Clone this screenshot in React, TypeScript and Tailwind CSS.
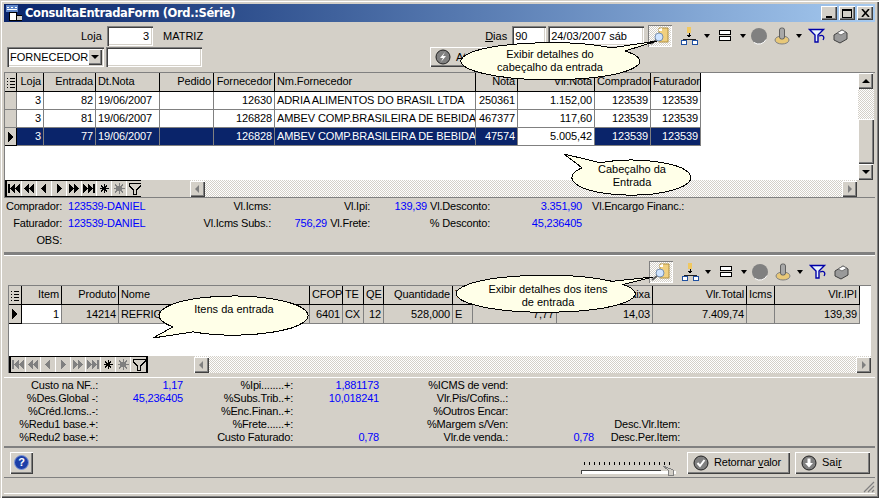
const bevel = 'shadow-[inset_1px_1px_0_#fff,inset_-1px_-1px_0_#404040,inset_-2px_-2px_0_#808080]';
const sunken = 'shadow-[inset_1px_1px_0_#808080,inset_2px_2px_0_#404040,inset_-1px_-1px_0_#fff,inset_-2px_-2px_0_#d4d0c8]';
const dither = 'bg-[repeating-conic-gradient(#d4d0c8_0_25%,#fff_0_50%)] bg-[length:2px_2px]';

type Col = { label: string; left?: boolean };

const cols1: Col[] = [
  { label: 'Loja' }, { label: 'Entrada' }, { label: 'Dt.Nota', left: true }, { label: 'Pedido' },
  { label: 'Fornecedor' }, { label: 'Nm.Fornecedor', left: true }, { label: 'Nota' }, { label: 'Vlr.Nota' },
  { label: 'Comprador' }, { label: 'Faturador' },
];
const rows1 = [
  ['3', '82', '19/06/2007', '', '12630', 'ADRIA ALIMENTOS DO BRASIL LTDA', '250361', '1.152,00', '123539', '123539'],
  ['3', '81', '19/06/2007', '', '126828', 'AMBEV COMP.BRASILEIRA DE BEBIDA', '467377', '117,60', '123539', '123539'],
  ['3', '77', '19/06/2007', '', '126828', 'AMBEV COMP.BRASILEIRA DE BEBIDA', '47574', '5.005,42', '123539', '123539'],
];
const cols2: Col[] = [
  { label: 'Item' }, { label: 'Produto' }, { label: 'Nome', left: true }, { label: 'CFOP' }, { label: 'TE', left: true },
  { label: 'QE' }, { label: 'Quantidade' }, { label: 'T', left: true }, { label: 'Vlr.Unit' }, { label: 'Vlr.Caixa' },
  { label: 'Vlr.Total' }, { label: 'Icms', left: true }, { label: 'Vlr.IPI' },
];
const row2 = ['1', '14214', 'REFRIGERANTE', '6401', 'CX', '12', '528,000', 'E', '7,77', '14,03', '7.409,74', '', '139,39'];

const tpl1 = 'grid grid-cols-[12px_27px_52px_64px_54px_61px_201px_42px_77px_56px_50px] w-max';
const tpl2 = 'grid grid-cols-[13px_40px_57px_191px_33px_21px_20px_69px_20px_84px_96px_94px_28px_85px] w-max';

function Arrow({ dir }: { dir: 'l' | 'r' | 'u' | 'd' }) {
  const pts = { l: '6,1 2,5 6,9', r: '3,1 7,5 3,9', u: '1,7 5,3 9,7', d: '1,3 5,7 9,3' }[dir];
  const fill = dir === 'u' || dir === 'd' ? '#000' : '#808080';
  return (
    <svg width="10" height="10" viewBox="0 0 10 10"><polygon points={pts} fill={fill} /></svg>
  );
}

function NavGlyph({ kind, off }: { kind: string; off?: boolean }) {
  const c = off ? '#808080' : '#000';
  const body: Record<string, React.ReactNode> = {
    first: <><rect x="1" y="2" width="2" height="9" fill={c} /><polygon points="8,2 3,6.5 8,11" fill={c} /><polygon points="13,2 8,6.5 13,11" fill={c} /></>,
    prevp: <><polygon points="7,2 2,6.5 7,11" fill={c} /><polygon points="12,2 7,6.5 12,11" fill={c} /></>,
    prev: <polygon points="9,2 4,6.5 9,11" fill={c} />,
    next: <polygon points="5,2 10,6.5 5,11" fill={c} />,
    nextp: <><polygon points="2,2 7,6.5 2,11" fill={c} /><polygon points="7,2 12,6.5 7,11" fill={c} /></>,
    last: <><polygon points="1,2 6,6.5 1,11" fill={c} /><polygon points="6,2 11,6.5 6,11" fill={c} /><rect x="11" y="2" width="2" height="9" fill={c} /></>,
    star: <path d="M7 2v9M2.5 6.5h9M3.8 3.3l6.4 6.4M10.2 3.3l-6.4 6.4" stroke="#000" strokeWidth="1" />,
    sun: <><circle cx="7" cy="6.5" r="3" fill="#808080" /><path d="M7 1v11M1.5 6.5h11M3 2.5l8 8M11 2.5l-8 8" stroke="#808080" strokeWidth="1" /></>,
    filter: <path d="M1 1.5h12v2L8.5 8v4h-3V8L1 3.5z" fill="none" stroke="#000" strokeWidth="1" />,
  };
  return (
    <div className="w-[15px] h-[15px] flex items-center justify-center bg-[#d4d0c8] border-r border-white last:border-r-0">
      <svg width="14" height="13" viewBox="0 0 14 13" shapeRendering="crispEdges">{body[kind]}</svg>
    </div>
  );
}

function Navigator({ off }: { off?: boolean }) {
  const kinds = ['first', 'prevp', 'prev', 'next', 'nextp', 'last'];
  return (
    <div className="flex border-2 border-black bg-white h-[17px] items-center shrink-0">
      {kinds.map(k => <NavGlyph key={k} kind={k} off={off} />)}
      <NavGlyph kind="star" />
      <NavGlyph kind="sun" />
      <NavGlyph kind="filter" />
    </div>
  );
}

function ScrollBtn({ dir }: { dir: 'l' | 'r' | 'u' | 'd' }) {
  return (
    <div className={`w-[15px] h-[16px] shrink-0 bg-[#d4d0c8] flex items-center justify-center ${bevel}`}>
      <Arrow dir={dir} />
    </div>
  );
}

function Drop({ className }: { className: string }) {
  return <div className={`${className} w-0 h-0 border-x-[3.5px] border-x-transparent border-t-[4px] border-t-black`} />;
}

function Toolbar() {
  return (
    <div className="flex items-center h-[22px]">
      <div className={`w-[24px] h-[22px] flex items-center justify-center ${dither} shadow-[inset_1px_1px_0_#808080,inset_-1px_-1px_0_#fff]`}>
        <svg width="20" height="18" viewBox="0 0 20 18">
          <path d="M9 1h9v14H9z" fill="#f0d080" stroke="#b09040" />
          <path d="M9 2l3-1v3H9z" fill="#fff" />
          <circle cx="9" cy="10" r="4" fill="#cfe4ff" stroke="#7890b0" />
          <path d="M6 13l-5 4" stroke="#606060" strokeWidth="2" />
        </svg>
      </div>
      <svg className="ml-[8px]" width="20" height="18" viewBox="0 0 20 18" shapeRendering="crispEdges">
        <rect x="7" y="0" width="4" height="6" fill="#f0c860" />
        <path d="M9 6v4M7 8h4M8 9h2" stroke="#000" />
        <path d="M3 12h12M3 12v1M15 12v1" stroke="#202020" />
        <rect x="1" y="13" width="5" height="4" fill="#fff" stroke="#2050a0" />
        <rect x="12" y="13" width="5" height="4" fill="#fff" stroke="#2050a0" />
      </svg>
      <Drop className="ml-[4px]" />
      <svg className="ml-[7px]" width="18" height="14" viewBox="0 0 18 14" shapeRendering="crispEdges">
        <rect x="2.5" y="1.5" width="11" height="4" fill="#fff" stroke="#000" />
        <rect x="2.5" y="7.5" width="11" height="4" fill="#fff" stroke="#000" />
      </svg>
      <Drop className="ml-[5px]" />
      <svg className="ml-[4px]" width="18" height="18" viewBox="0 0 18 18">
        <circle cx="9" cy="9" r="8" fill="#808080" />
        <path d="M4 15.5a8 8 0 0 0 12-3" fill="none" stroke="#fff" />
      </svg>
      <svg className="ml-[5px]" width="18" height="20" viewBox="0 0 18 20">
        <ellipse cx="9" cy="14" rx="7" ry="4" fill="#e8c878" stroke="#808080" />
        <rect x="6.5" y="2" width="5" height="11" rx="2" fill="#a8a8a8" stroke="#606060" />
      </svg>
      <Drop className="ml-[5px]" />
      <svg className="ml-[6px]" width="20" height="18" viewBox="0 0 20 18">
        <path d="M1.5 2.5h14l-5.5 5.5v7H7V8z" fill="#e8f4ff" stroke="#0000a8" strokeWidth="1.4" />
        <path d="M11 9c4-2 6 1 4 4" fill="none" stroke="#0000a8" strokeWidth="1.2" />
      </svg>
      <svg className="ml-[4px]" width="17" height="16" viewBox="0 0 17 16">
        <path d="M2 7l8-5 5 3v6l-7 4-6-3z" fill="#9a9a9a" stroke="#404040" />
        <path d="M5 5l5-3 4 2-5 3z" fill="#fff" stroke="#707070" />
      </svg>
    </div>
  );
}

function Indicator({ kind }: { kind: 'head' | 'row' | 'blank' }) {
  return (
    <div className={`bg-[#d4d0c8] border-r border-b flex items-center justify-center ${kind === 'blank' ? 'border-[#808080]' : 'border-black'}`}>
      {kind === 'row' && (
        <svg width="6" height="10" viewBox="0 0 6 10" shapeRendering="crispEdges"><polygon points="0,0 6,5 0,10" fill="#000" /></svg>
      )}
      {kind === 'head' && (
        <svg width="8" height="11" viewBox="0 0 8 11" shapeRendering="crispEdges">
          <path d="M0 1h1M0 4h1M0 7h1M0 10h1M3 1h5M3 4h5M3 7h5M3 10h5" stroke="#000" />
        </svg>
      )}
    </div>
  );
}

function Head({ col }: { col: Col }) {
  return (
    <div className={`h-[19px] px-[2px] leading-[17px] tracking-[-0.1px] whitespace-nowrap overflow-hidden border-r border-b border-black bg-[#d4d0c8] ${col.left ? 'text-left' : 'text-right'}`}>
      {col.label}
    </div>
  );
}

function InfoLabel({ children, className = '' }: { children?: React.ReactNode; className?: string }) {
  return <div className={`text-right whitespace-nowrap tracking-[-0.2px] ${className}`}>{children}</div>;
}

function InfoValue({ children, className = '' }: { children?: React.ReactNode; className?: string }) {
  return <div className={`text-right whitespace-nowrap tracking-[-0.2px] text-[#0000ff] ${className}`}>{children}</div>;
}

const lower = [
  ['Custo na NF..:', '1,17', '%Ipi........+:', '1,881173', '%ICMS de vend:', '', ''],
  ['%Des.Global -:', '45,236405', '%Subs.Trib..+:', '10,018241', 'Vlr.Pis/Cofins..:', '', ''],
  ['%Créd.Icms..-:', '', '%Enc.Finan..+:', '', '%Outros Encar:', '', ''],
  ['%Redu1 base.+:', '', '%Frete......+:', '', '%Margem s/Ven:', '', 'Desc.Vlr.Item:'],
  ['%Redu2 base.+:', '', 'Custo Faturado:', '0,78', 'Vlr.de venda.:', '0,78', 'Desc.Per.Item:'],
];

function CircleBtnIcon({ kind }: { kind: 'check' | 'down' | 'bolt' }) {
  return (
    <svg className="shrink-0" width="16" height="16" viewBox="0 0 16 16">
      <circle cx="8" cy="8" r="7" fill="#808080" stroke="#202020" />
      {kind === 'check' && <path d="M4.5 8l2.5 3 4.5-6" fill="none" stroke="#fff" strokeWidth="2" />}
      {kind === 'down' && <path d="M6.5 3.5h3V8H12l-4 4.5L4 8h2.5z" fill="#fff" />}
      {kind === 'bolt' && <path d="M10 3L5 9h3l-2 4 5-6H8z" fill="#fff" />}
    </svg>
  );
}

export default function App() {
  return (
    <div className="relative w-[879px] h-[498px] overflow-hidden bg-[#d4d0c8] p-[4px] text-[11px] leading-[13px] text-black font-['Liberation_Sans',Arial,sans-serif] shadow-[inset_1px_1px_0_#d4d0c8,inset_2px_2px_0_#fff,inset_-1px_-1px_0_#404040,inset_-2px_-2px_0_#808080]">
      {/* title bar */}
      <div className="h-[18px] flex items-center bg-gradient-to-r from-[#0a246a] to-[#a6caf0] pl-[2px] pr-[2px]">
        <svg width="16" height="16" viewBox="0 0 16 16" shapeRendering="crispEdges">
          <rect x="0" y="0" width="12" height="7" fill="#5f86c8" />
          <path d="M1 2h2M5 2h2M9 2h2M1 4h10" stroke="#fff" />
          <rect x="3" y="7" width="7" height="8" fill="#fff" stroke="#000" />
          <rect x="10" y="10" width="6" height="5" fill="#d4d0c8" stroke="#000" />
        </svg>
        <span className="ml-[3px] text-white font-bold text-[11.5px] font-['DejaVu_Sans',sans-serif] tracking-[-0.35px] whitespace-nowrap">ConsultaEntradaForm (Ord.:Série)</span>
        <div className="ml-auto flex items-center">
          <div className={`w-[16px] h-[14px] bg-[#d4d0c8] flex items-end justify-center pb-[2px] ${bevel}`}><div className="w-[6px] h-[2px] bg-black" /></div>
          <div className={`ml-[2px] w-[16px] h-[14px] bg-[#d4d0c8] flex items-center justify-center ${bevel}`}><div className="w-[10px] h-[9px] border border-black border-t-2" /></div>
          <div className={`ml-[2px] w-[16px] h-[14px] bg-[#d4d0c8] flex items-center justify-center ${bevel}`}>
            <svg width="9" height="8" viewBox="0 0 9 8"><path d="M1 0l7 8M8 0L1 8" stroke="#000" strokeWidth="1.6" /></svg>
          </div>
        </div>
      </div>

      {/* top controls */}
      <div className="h-[50px]">
        <div className="h-[25px] flex items-center pt-[3px]">
          <span className="ml-[77px] w-[26px]">Lo<span className="underline">j</span>a</span>
          <div className={`w-[46px] h-[20px] bg-white text-right pr-[4px] leading-[20px] ${sunken}`}>3</div>
          <span className="ml-[10px]">MATRIZ</span>
          <span className="ml-[282px] w-[27px]"><span className="underline">D</span>ias</span>
          <div className={`w-[34px] h-[20px] bg-white pl-[3px] leading-[20px] ${sunken}`}>90</div>
          <div className={`ml-[2px] w-[96px] h-[20px] bg-white pl-[3px] leading-[20px] ${sunken}`}>24/03/2007 sáb</div>
          <div className="ml-[4px]"><Toolbar /></div>
        </div>
        <div className="h-[25px] flex items-start">
          <div className={`ml-[3px] w-[97px] h-[20px] bg-white pl-[3px] flex items-center justify-between pr-[2px] ${sunken}`}>
            <span>FORNECEDOR</span>
            <div className={`w-[15px] h-[16px] bg-[#d4d0c8] flex items-center justify-center ${bevel}`}><Arrow dir="d" /></div>
          </div>
          <div className={`ml-[2px] w-[96px] h-[20px] bg-white ${sunken}`} />
          <div className={`ml-[228px] w-[90px] h-[20px] flex items-center pl-[5px] gap-[5px] bg-[#d4d0c8] ${bevel}`}>
            <CircleBtnIcon kind="bolt" />
            <span>Atualizar</span>
          </div>
        </div>
      </div>

      {/* master grid */}
      <div className="h-[125px] flex flex-col border-t border-l border-[#808080]">
        <div className="flex h-[107px]">
          <div className="w-[853px] bg-white overflow-hidden tracking-[-0.1px]">
            <div className={tpl1}>
              <Indicator kind="head" />
              {cols1.map(c => <Head key={c.label} col={c} />)}
            </div>
            {rows1.map((row, i) => (
              <div key={i} className={`${tpl1} h-[18px]`}>
                <Indicator kind={i === 2 ? 'row' : 'blank'} />
                {row.map((v, j) => (
                  <div
                    key={j}
                    className={`px-[2px] leading-[17px] whitespace-nowrap overflow-hidden border-r border-b border-[#808080] ${cols1[j].left ? 'text-left' : 'text-right'} ${i === 2 && j !== 7 ? 'bg-[#0a246a] text-white' : 'bg-white'}`}
                  >
                    {v}
                  </div>
                ))}
              </div>
            ))}
          </div>
          <div className="w-[16px] flex flex-col">
            <ScrollBtn dir="u" />
            <div className={`h-[30px] ${dither}`} />
            <div className={`h-[45px] bg-[#d4d0c8] ${bevel}`} />
            <ScrollBtn dir="d" />
          </div>
        </div>
        <div className={`h-[17px] flex items-center w-[852px] ${dither}`}>
          <div className="w-[136px] self-stretch bg-[#d4d0c8] flex items-center"><Navigator /></div>
          <div className="w-[49px] self-stretch bg-[#d4d0c8]" />
          <ScrollBtn dir="l" />
          <div className="flex-1" />
          <ScrollBtn dir="r" />
        </div>
      </div>

      {/* master details */}
      <div className="h-[55px] border-t border-[#808080] grid grid-cols-[58px_130px_79px_56px_43px_57px_63px_92px_auto] grid-rows-[17px_17px_16px] content-start leading-[17px]">
        <InfoLabel>Comprador:</InfoLabel>
        <InfoValue className="text-left! pl-[6px]">123539-DANIEL</InfoValue>
        <InfoLabel>Vl.Icms:</InfoLabel>
        <InfoValue />
        <InfoLabel>Vl.Ipi:</InfoLabel>
        <InfoValue>139,39</InfoValue>
        <InfoLabel>Vl.Desconto:</InfoLabel>
        <InfoValue>3.351,90</InfoValue>
        <InfoLabel className="pl-[10px] text-left!">Vl.Encargo Financ.:</InfoLabel>

        <InfoLabel>Faturador:</InfoLabel>
        <InfoValue className="text-left! pl-[6px]">123539-DANIEL</InfoValue>
        <InfoLabel>Vl.Icms Subs.:</InfoLabel>
        <InfoValue>756,29</InfoValue>
        <InfoLabel>Vl.Frete:</InfoLabel>
        <InfoValue />
        <InfoLabel>% Desconto:</InfoLabel>
        <InfoValue>45,236405</InfoValue>
        <div />

        <InfoLabel>OBS:</InfoLabel>
      </div>

      {/* splitter */}
      <div className="h-[4px] border-t-[3px] border-[#808080] border-b border-b-white" />

      {/* detail section */}
      <div className="h-[119px] flex flex-col">
        <div className="h-[29px] flex items-start pl-[645px] pt-[5px]"><Toolbar /></div>
        <div className="ml-[4px] w-[863px] flex flex-col border-t border-l border-[#808080]">
          <div className="h-[70px] bg-white overflow-hidden tracking-[-0.1px]">
            <div className={tpl2}>
              <Indicator kind="head" />
              {cols2.map(c => <Head key={c.label} col={c} />)}
            </div>
            <div className={`${tpl2} h-[19px]`}>
              <Indicator kind="row" />
              {row2.map((v, j) => (
                <div
                  key={j}
                  className={`px-[2px] leading-[18px] whitespace-nowrap overflow-hidden border-r border-b border-[#808080] ${cols2[j].left ? 'text-left' : 'text-right'} ${j === 0 ? 'bg-white' : 'bg-[#d4d0c8]'}`}
                >
                  {v}
                </div>
              ))}
            </div>
          </div>
          <div className={`h-[17px] flex items-center ${dither}`}>
            <div className="w-[185px] self-stretch bg-[#d4d0c8] flex items-center"><Navigator off /></div>
            <ScrollBtn dir="l" />
            <div className="flex-1" />
            <ScrollBtn dir="r" />
          </div>
        </div>
      </div>

      {/* item figures */}
      <div className="mt-[2px] h-[71px] pl-[2px] border-t border-b-2 border-t-white border-b-[#808080] grid grid-cols-[92px_85px_110px_86px_129px_86px_86px] auto-rows-[13px] pt-[1px] content-start">
        {lower.map((row, i) =>
          row.map((v, j) =>
            j % 2 === 0
              ? <InfoLabel key={`${i}-${j}`} className="leading-[13px]">{v}</InfoLabel>
              : <InfoValue key={`${i}-${j}`} className="leading-[13px]">{v}</InfoValue>,
          ),
        )}
      </div>

      {/* bottom buttons */}
      <div className="h-[29px] flex items-center pl-[6px]">
        <div className={`w-[23px] h-[22px] bg-[#d4d0c8] flex items-center justify-center ${bevel}`}>
          <div className="w-[15px] h-[15px] rounded-full bg-[#1c3fa8] border border-[#8098d8] text-white font-bold text-[11px] leading-[13px] text-center">?</div>
        </div>
        <svg className="ml-[547px] mt-[12px]" width="97" height="16" viewBox="0 0 97 16" shapeRendering="crispEdges">
          <path d="M4 1v3M9 1v3M14 1v3M19 1v3M24 1v3M29 1v3M34 1v3M39 1v3M44 1v3M49 1v3M54 1v3M59 1v3M64 1v3M69 1v3M74 1v3M79 1v3M84 1v3M89 1v3" stroke="#000" />
          <path d="M1 12V9h80M1 12h80" stroke="#404040" fill="none" />
          <rect x="2" y="10" width="94" height="3" fill="#fff" />
          <polygon points="83,5 88,9 88,14 93,14 93,9 91,8" fill="#d4d0c8" stroke="#808080" />
        </svg>
        <div className={`ml-[10px] w-[103px] h-[22px] bg-[#d4d0c8] flex items-center pl-[6px] gap-[5px] tracking-[-0.2px] ${bevel}`}>
          <CircleBtnIcon kind="check" />
          <span>Retornar <span className="underline">v</span>alor</span>
        </div>
        <div className={`ml-[5px] w-[75px] h-[22px] bg-[#d4d0c8] flex items-center pl-[6px] gap-[5px] ${bevel}`}>
          <CircleBtnIcon kind="down" />
          <span>Sai<span className="underline">r</span></span>
        </div>
      </div>

      {/* status bar */}
      <div className="h-[17px] border-t border-[#808080] border-b border-b-white flex justify-end">
        <svg width="12" height="12" viewBox="0 0 12 12" className="self-end">
          <path d="M11 1L1 11M11 5L5 11M11 9L9 11" stroke="#808080" strokeWidth="1.2" />
        </svg>
      </div>

      {/* balloons */}
      <svg className="absolute left-0 top-0 pointer-events-none" width="879" height="498" shapeRendering="crispEdges">
        <g fill="#ffffe8" stroke="#000">
          <path d="M612 47.8L657 41L625 51A89.5 18.5 0 1 1 612 47.8Z" />
          <path d="M600 162.7A59.5 17.5 0 1 1 582 167.8L564 154Z" />
          <path d="M193 331.9L153 338L173 326.9A74.5 19.5 0 1 1 193 331.9Z" />
          <path d="M612 281.3L653 277L623 284.4A89.5 18.5 0 1 1 612 281.3Z" />
        </g>
      </svg>
      <div className="absolute left-[470px] top-[48px] w-[160px] text-center">Exibir detalhes do<br />cabeçalho da entrada</div>
      <div className="absolute left-[582px] top-[163px] w-[100px] text-center">Cabeçalho da<br />Entrada</div>
      <div className="absolute left-[174px] top-[303px] w-[120px] text-center">Itens da entrada</div>
      <div className="absolute left-[468px] top-[283px] w-[160px] text-center">Exibir detalhes dos itens<br />de entrada</div>
    </div>
  );
}
